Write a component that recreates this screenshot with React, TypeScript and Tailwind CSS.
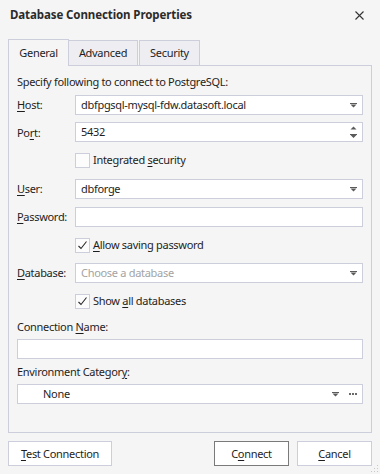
import React from "react";

const font = { fontFamily: '"Noto Sans", "Open Sans", Arial, sans-serif' };

// small access-key underline, like WinForms labels
const K: React.FC<{ children: React.ReactNode }> = ({ children }) => (
  <span className="underline underline-offset-[2px] decoration-[1px]">{children}</span>
);

const Arrow: React.FC = () => (
  <svg width="7" height="5" viewBox="0 0 7 5" className="shrink-0">
    <path d="M0 0h7v1H0z M0.5 1.5h6L3.5 4.5z" fill="#5a5a5a" />
  </svg>
);

const Check: React.FC<{ checked?: boolean }> = ({ checked }) => (
  <div className="w-[15px] h-[15px] border border-[#cccedb] bg-[#fcfcfc] flex items-center justify-center shrink-0">
    {checked && (
      <svg width="11" height="11" viewBox="0 0 11 11">
        <path d="M1.5 6 L4 8.5 L9.5 1.5" fill="none" stroke="#2a2a2a" strokeWidth="1.1" />
      </svg>
    )}
  </div>
);

const Field: React.FC<{
  value?: string;
  placeholder?: string;
  kind?: "combo" | "spin" | "text";
}> = ({ value, placeholder, kind = "text" }) => (
  <div className="flex-1 h-[20px] border border-[#cccedb] bg-white flex items-center pl-[5px] pr-[5px]">
    <span className={`flex-1 truncate ${placeholder ? "text-[#a3a3a3]" : "text-[#1e1e1e]"}`}>
      {value ?? placeholder}
    </span>
    {kind === "combo" && <Arrow />}
    {kind === "spin" && (
      <div className="flex flex-col gap-[4px]">
        <svg width="7" height="4" viewBox="0 0 7 4">
          <path d="M0.5 3.5h6L3.5 0.5z" fill="#5a5a5a" />
        </svg>
        <svg width="7" height="4" viewBox="0 0 7 4">
          <path d="M0 0h7v1H0z M0.5 1h6L3.5 4z" fill="#5a5a5a" />
        </svg>
      </div>
    )}
  </div>
);

const Row: React.FC<{ label: React.ReactNode; mt: string; children: React.ReactNode }> = ({
  label,
  mt,
  children,
}) => (
  <div className={`flex items-center ${mt}`}>
    <div className="w-[58px] shrink-0">{label}</div>
    {children}
  </div>
);

const CheckRow: React.FC<{ mt: string; checked?: boolean; children: React.ReactNode }> = ({
  mt,
  checked,
  children,
}) => (
  <div className={`flex items-center h-[16px] pl-[58px] gap-[3px] ${mt}`}>
    <Check checked={checked} />
    <span>{children}</span>
  </div>
);

const Button: React.FC<{ primary?: boolean; className?: string; children: React.ReactNode }> = ({
  primary,
  className,
  children,
}) => (
  <div
    className={`h-[25px] bg-white flex items-center justify-center border ${
      primary ? "border-[#7a7a7a]" : "border-[#cccedb]"
    } ${className ?? ""}`}
  >
    {children}
  </div>
);

export default function App() {
  return (
    <div
      className="relative w-[380px] h-[474px] bg-[#f5f5f5] text-[#1e1e1e] text-[11px] leading-[16px] tracking-[-0.3px] flex flex-col overflow-hidden"
      style={font}
    >
      {/* Title bar */}
      <div className="h-[30px] pl-[10px] pr-[16px] flex items-center justify-between">
        <span className="font-bold text-[11.5px] tracking-[-0.1px] text-[#2b2b2b]">Database Connection Properties</span>
        <svg width="9" height="9" viewBox="0 0 9 9">
          <path d="M0.5 0.5 L8.5 8.5 M8.5 0.5 L0.5 8.5" stroke="#333" strokeWidth="1.1" />
        </svg>
      </div>

      {/* Tabs */}
      <div className="mt-[9px] px-[8px] flex items-end h-[26px] relative z-10">
        <div className="w-[61px] h-[27px] -mb-px border border-b-0 border-[#cccedb] bg-[#f5f5f5] flex items-center justify-center">
          General
        </div>
        <div className="w-[69px] h-[25px] border border-l-0 border-b-0 border-[#cccedb] bg-[#eeeef2] flex items-center justify-center">
          Advanced
        </div>
        <div className="ml-[1px] w-[61px] h-[25px] border border-b-0 border-[#cccedb] bg-[#eeeef2] flex items-center justify-center">
          Security
        </div>
      </div>

      {/* Panel */}
      <div className="mx-[8px] h-[368px] border border-[#cccedb] px-[8px] flex flex-col">
        <div className="mt-[8px] h-[16px]">Specify following to connect to PostgreSQL:</div>

        <Row mt="mt-[5px]" label={<><K>H</K>ost:</>}>
          <Field value="dbfpgsql-mysql-fdw.datasoft.local" kind="combo" />
        </Row>
        <Row mt="mt-[7px]" label={<>Po<K>r</K>t:</>}>
          <div className="flex-1 flex h-[21px]">
            <Field value="5432" kind="spin" />
          </div>
        </Row>
        <CheckRow mt="mt-[9px]">
          Integrated <K>s</K>ecurity
        </CheckRow>

        <Row mt="mt-[11px]" label={<><K>U</K>ser:</>}>
          <Field value="dbforge" kind="combo" />
        </Row>
        <Row mt="mt-[8px]" label={<><K>P</K>assword:</>}>
          <Field value="" />
        </Row>
        <CheckRow mt="mt-[10px]" checked>
          <K>A</K>llow saving password
        </CheckRow>

        <Row mt="mt-[10px]" label={<><K>D</K>atabase:</>}>
          <Field placeholder="Choose a database" kind="combo" />
        </Row>
        <CheckRow mt="mt-[10px]" checked>
          Show <K>a</K>ll databases
        </CheckRow>

        <div className="mt-[10px] h-[16px]">
          Connection <K>N</K>ame:
        </div>
        <div className="mt-[4px] flex">
          <Field value="" />
        </div>

        <div className="mt-[5px] h-[16px]">
          Environment Categor<K>y</K>:
        </div>
        <div className="mt-[4px] h-[20px] border border-[#cccedb] bg-white flex items-center pl-[25px] pr-[5px]">
          <span className="flex-1">None</span>
          <Arrow />
          <svg width="8" height="2" viewBox="0 0 8 2" className="ml-[10px]">
            <rect x="0" y="0" width="2" height="2" fill="#6a6a6a" />
            <rect x="3" y="0" width="2" height="2" fill="#6a6a6a" />
            <rect x="6" y="0" width="2" height="2" fill="#6a6a6a" />
          </svg>
        </div>
      </div>

      {/* Buttons */}
      <div className="mt-[8px] px-[8px] flex items-center">
        <Button className="w-[104px]">
          <span><K>T</K>est Connection</span>
        </Button>
        <div className="flex-1" />
        <Button primary className="w-[75px]">
          <span>C<K>o</K>nnect</span>
        </Button>
        <Button className="w-[75px] ml-[8px]">
          <span><K>C</K>ancel</span>
        </Button>
      </div>

      {/* resize grip */}
      <svg width="8" height="8" viewBox="0 0 8 8" className="absolute right-[1px] bottom-[1px]">
        <rect x="6" y="0" width="1" height="1" fill="#c8c8c8" />
        <rect x="3" y="3" width="1" height="1" fill="#c8c8c8" />
        <rect x="6" y="3" width="1" height="1" fill="#c8c8c8" />
        <rect x="0" y="6" width="1" height="1" fill="#c8c8c8" />
        <rect x="3" y="6" width="1" height="1" fill="#c8c8c8" />
        <rect x="6" y="6" width="1" height="1" fill="#c8c8c8" />
      </svg>
    </div>
  );
}
